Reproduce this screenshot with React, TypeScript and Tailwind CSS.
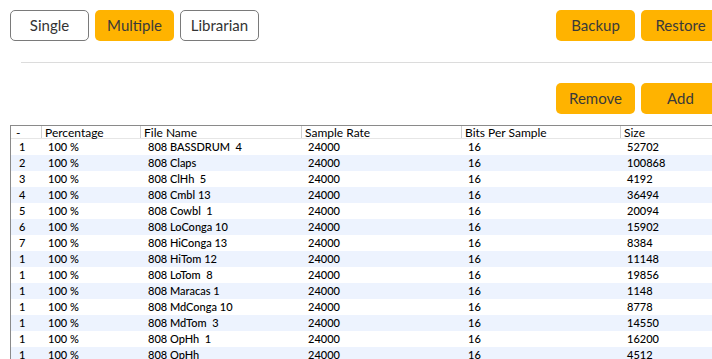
import { FC } from "react";

const rows: [string, string, string][] = [
  ["1", "808 BASSDRUM  4", "52702"],
  ["2", "808 Claps", "100868"],
  ["3", "808 ClHh  5", "4192"],
  ["4", "808 Cmbl 13", "36494"],
  ["5", "808 Cowbl  1", "20094"],
  ["6", "808 LoConga 10", "15902"],
  ["7", "808 HiConga 13", "8384"],
  ["1", "808 HiTom 12", "11148"],
  ["1", "808 LoTom  8", "19856"],
  ["1", "808 Maracas 1", "1148"],
  ["1", "808 MdConga 10", "8778"],
  ["1", "808 MdTom  3", "14550"],
  ["1", "808 OpHh  1", "16200"],
  ["1", "808 OpHh", "4512"],
];

const cols = ["w-[30px]", "w-[99px]", "w-[161px]", "w-[160px]", "w-[159px]", "w-[100px]"];

const Btn: FC<{ label: string; active?: boolean }> = ({ label, active }) => (
  <button
    className={
      active
        ? "w-[79px] h-[31px] rounded-[5px] bg-[#ffb300] text-[15px] text-[#3a3a3a]"
        : "w-[79px] h-[31px] rounded-[5px] border border-[#7a7a7a] bg-white text-[15px] text-[#333]"
    }
  >
    {label}
  </button>
);

const App: FC = () => {
  const headers = ["-", "Percentage", "File Name", "Sample Rate", "Bits Per Sample", "Size"];
  return (
    <div className="w-[712px] h-[359px] overflow-hidden bg-white" style={{ fontFamily: "Lato, 'Liberation Sans', sans-serif" }}>
      <div className="w-[730px]">
        <div className="flex items-center pt-[10px] pl-[10px] pr-[10px]">
          <div className="flex gap-[6px]">
            <Btn label="Single" />
            <Btn label="Multiple" active />
            <Btn label="Librarian" />
          </div>
          <div className="ml-auto flex gap-[6px]">
            <Btn label="Backup" active />
            <Btn label="Restore" active />
          </div>
        </div>
        <div className="ml-[21px] mt-[21px] h-px bg-[#dcdcdc]" />
        <div className="flex justify-end gap-[6px] pr-[10px] mt-[20px]">
          <Btn label="Remove" active />
          <Btn label="Add" active />
        </div>
        <div className="ml-[10px] mt-[11px] border-t border-l border-[#8a8a8a] text-black">
          <div className="flex h-[13px] items-center text-[12px] leading-[13px] border-b border-[#e6e6e6]">
            {headers.map((h, i) => (
              <div key={h} className={`${cols[i]} shrink-0 h-full flex items-center`}>
                <div className={i === 0 ? "pl-[5px]" : "border-l border-[#cfcfcf] pl-[3px] h-full flex items-center"}>{h}</div>
              </div>
            ))}
          </div>
          {rows.map((r, i) => (
            <div key={i} className={`flex h-[16px] items-center text-[11px] font-medium ${i % 2 === 1 ? "bg-[#edf3fe]" : "bg-white"}`}>
              <div className={`${cols[0]} shrink-0 pl-[8px]`}>{r[0]}</div>
              <div className={`${cols[1]} shrink-0 pl-[7px]`}>100 %</div>
              <div className={`${cols[2]} shrink-0 pl-[8px] whitespace-pre`}>{r[1]}</div>
              <div className={`${cols[3]} shrink-0 pl-[7px]`}>24000</div>
              <div className={`${cols[4]} shrink-0 pl-[7px]`}>16</div>
              <div className={`${cols[5]} shrink-0 pl-[7px]`}>{r[2]}</div>
            </div>
          ))}
        </div>
      </div>
    </div>
  );
};

export default App;
